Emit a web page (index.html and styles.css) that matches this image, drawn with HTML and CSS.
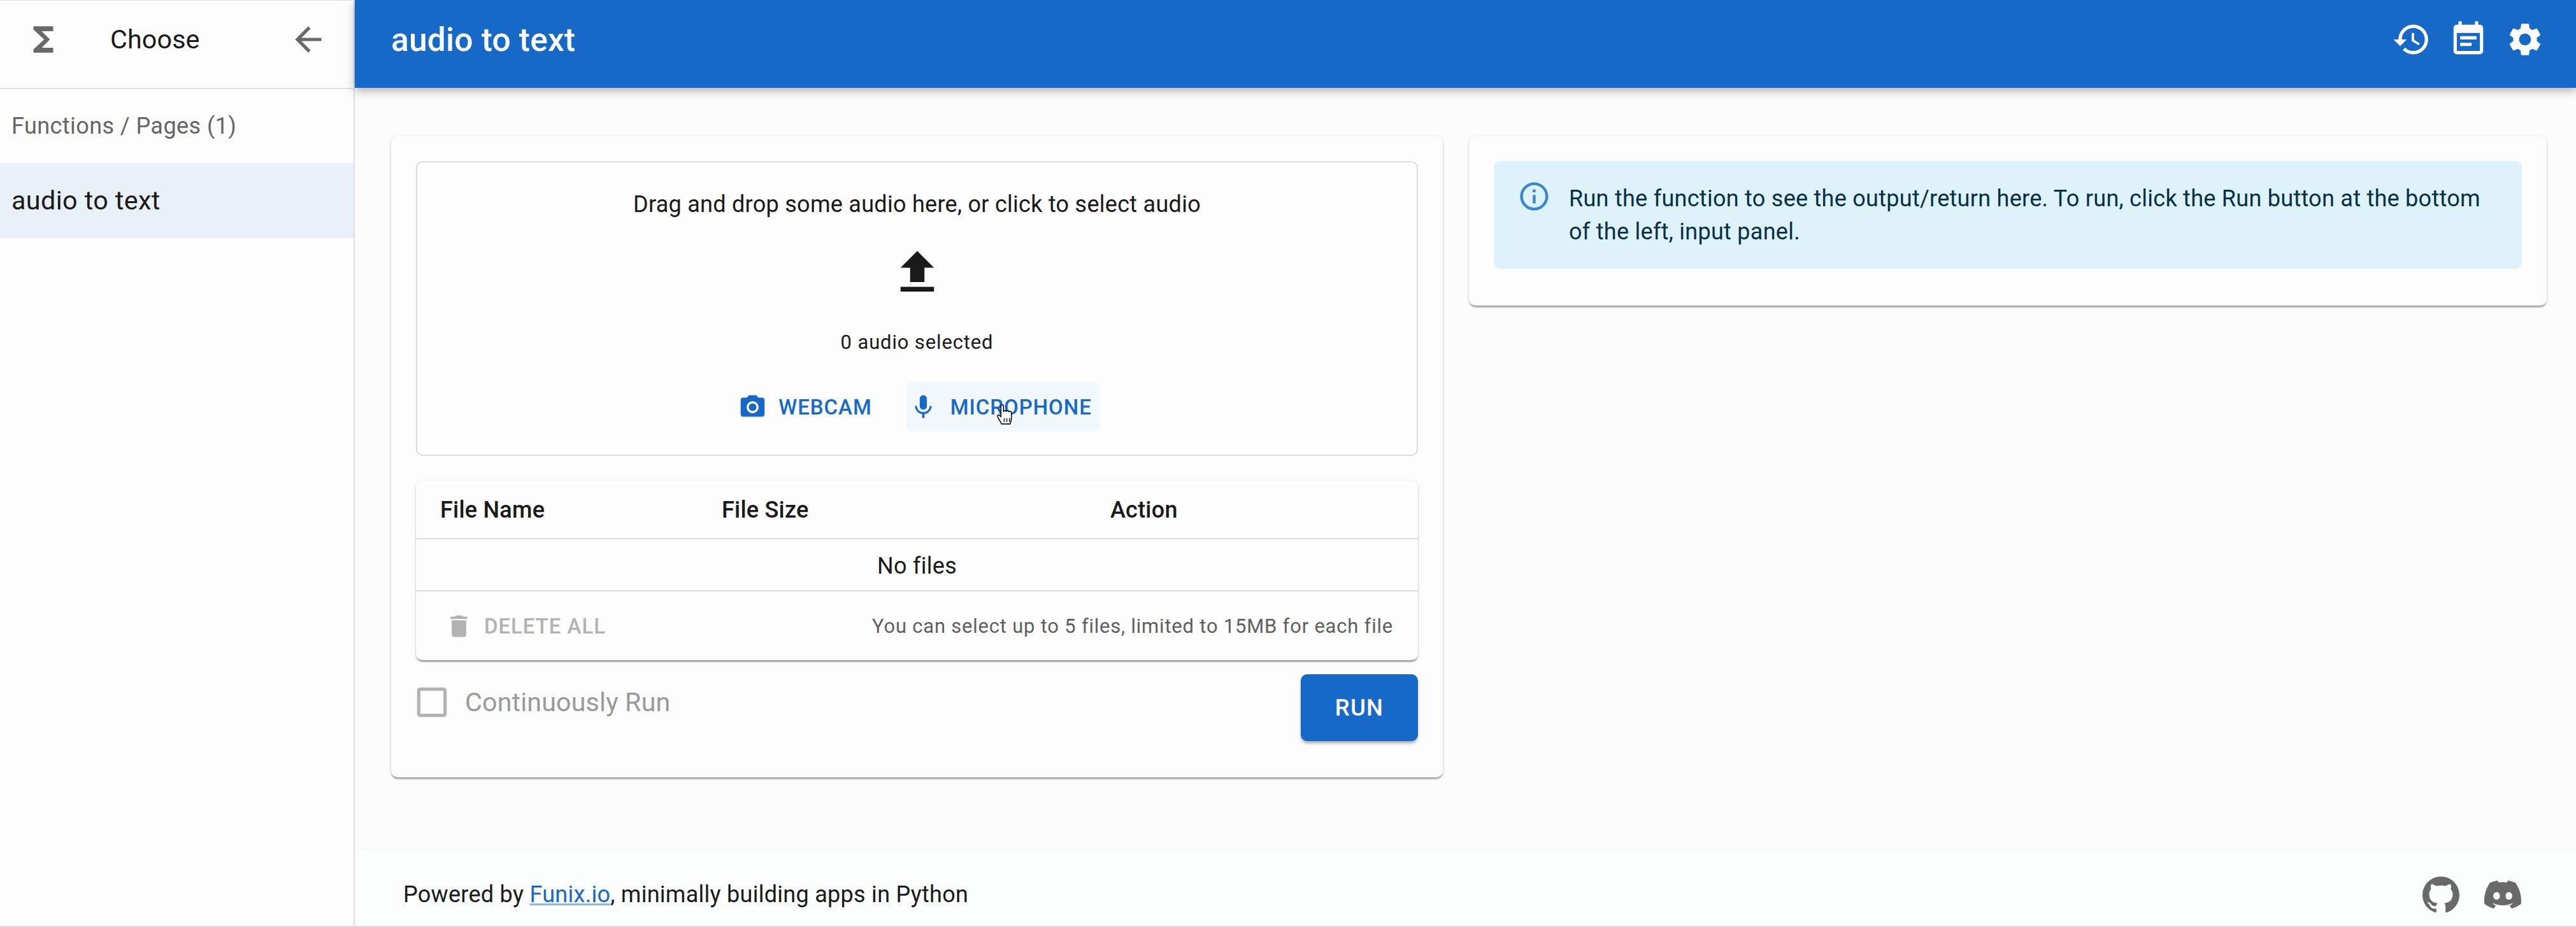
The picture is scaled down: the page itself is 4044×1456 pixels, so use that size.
FILE: index.html
```html
<!DOCTYPE html>
<html lang="en">
<head>
<meta charset="utf-8">
<title>audio to text</title>
<link rel="stylesheet" href="styles.css">
</head>
<body>
<div class="app">
  <aside class="sidebar">
    <div class="side-head">
      <svg class="ic ic-sigma" viewBox="0 0 24 24"><path d="M18 4H6v2l6.500 6L6 18v2h12v-3h-7l5-5-5-5h7z"/></svg>
      <span class="side-title">Choose</span>
      <svg class="ic ic-back" viewBox="0 0 24 24"><path d="M20 11H7.830l5.590-5.590L12 4l-8 8 8 8 1.410-1.410L7.830 13H20v-2z"/></svg>
    </div>
    <div class="side-label">Functions / Pages (1)</div>
    <div class="side-item">audio to text</div>
  </aside>
  <div class="main">
    <header class="topbar">
      <h1 class="top-title">audio to text</h1>
      <div class="top-icons">
        <svg class="ic-top" viewBox="0 0 24 24"><path d="M13 3c-4.970 0-9 4.030-9 9H1l3.890 3.890.07.14L9 12H6c0-3.870 3.130-7 7-7s7 3.130 7 7-3.130 7-7 7c-1.930 0-3.680-.79-4.940-2.060l-1.420 1.420C8.270 19.990 10.510 21 13 21c4.970 0 9-4.030 9-9s-4.030-9-9-9zm-1 5v5l4.280 2.540.72-1.210-3.500-2.080V8H12z"/></svg>
        <svg class="ic-top" viewBox="0 0 24 24"><path d="M17 10H7v2h10v-2zm2-7h-1V1h-2v2H8V1H6v2H5c-1.110 0-1.990.9-1.990 2L3 19c0 1.100.89 2 2 2h14c1.100 0 2-.9 2-2V5c0-1.100-.9-2-2-2zm0 16H5V8h14v11zm-5-5H7v2h7v-2z"/></svg>
        <svg class="ic-top" viewBox="0 0 24 24"><path d="M19.140 12.940c.04-.3.06-.61.06-.94 0-.32-.02-.64-.07-.94l2.030-1.580c.18-.14.23-.41.12-.61l-1.920-3.320c-.12-.22-.37-.29-.59-.22l-2.390.96c-.5-.38-1.030-.7-1.620-.94l-.36-2.540c-.04-.24-.24-.41-.48-.41h-3.840c-.24 0-.43.17-.47.41l-.36 2.540c-.59.24-1.130.57-1.620.94l-2.390-.96c-.22-.08-.47 0-.59.22L2.740 8.870c-.12.21-.08.47.12.61l2.030 1.580c-.05.3-.09.63-.09.94s.02.64.07.94l-2.030 1.580c-.18.14-.23.41-.12.61l1.920 3.320c.12.22.37.29.59.22l2.390-.96c.5.38 1.030.7 1.620.94l.36 2.540c.05.24.24.41.48.41h3.840c.24 0 .44-.17.47-.41l.36-2.540c.59-.24 1.130-.56 1.620-.94l2.390.96c.22.08.47 0 .59-.22l1.920-3.320c.12-.22.07-.47-.12-.61l-2.010-1.580zM12 15.600c-1.980 0-3.600-1.620-3.600-3.600s1.620-3.600 3.600-3.600 3.600 1.620 3.600 3.600-1.620 3.600-3.600 3.600z"/></svg>
      </div>
    </header>
    <main class="content">
      <section class="panel panel-input">
        <div class="drop">
          <div class="drop-text">Drag and drop some audio here, or click to select audio</div>
          <svg class="ic-upload" viewBox="0 0 24 24"><path d="M9 16h6v-6h4l-7-7-7 7h4v6zm-4 2h14v2H5v-2z"/></svg>
          <div class="drop-count">0 audio selected</div>
          <div class="drop-actions">
            <span class="btn-text">
              <svg class="ic-btn" viewBox="0 0 24 24"><path fill-rule="evenodd" d="M9 2 7.170 4H4c-1.100 0-2 .9-2 2v12c0 1.100.9 2 2 2h16c1.100 0 2-.9 2-2V6c0-1.100-.9-2-2-2h-3.170L15 2H9zm3 15c-2.760 0-5-2.240-5-5s2.240-5 5-5 5 2.240 5 5-2.240 5-5 5z"/><circle cx="12" cy="12" r="3.200"/></svg>
              WEBCAM
            </span>
            <span class="btn-text btn-hover">
              <svg class="ic-btn ic-mic" viewBox="0 0 24 24"><path d="M12 14c1.660 0 2.990-1.340 2.990-3L15 5c0-1.660-1.340-3-3-3S9 3.340 9 5v6c0 1.660 1.340 3 3 3zm5.300-3c0 3-2.540 5.100-5.300 5.100S6.700 14 6.700 11H5c0 3.410 2.720 6.230 6 6.720V21h2v-3.280c3.280-.48 6-3.300 6-6.720h-1.700z"/></svg>
              MICROPHONE
              <svg class="cursor" viewBox="0 0 30 34"><path d="M9 32 3 21c-1-2 1-4 3-2l2 2V5c0-3 4-3 4 0v8c1-2 4-2 4 0 1-2 4-2 4 .5 1-1.500 4-1 4 1.500v8c0 4-1 6-2 9z" fill="#fff" stroke="#111" stroke-width="1.600" stroke-linejoin="round"/><path d="M13 23v6M17 23v6M21 23v6" fill="none" stroke="#111" stroke-width="1.400"/></svg>
            </span>
          </div>
        </div>
        <div class="files">
          <div class="files-row files-head">
            <span>File Name</span>
            <span>File Size</span>
            <span>Action</span>
          </div>
          <div class="files-empty">No files</div>
          <div class="files-foot">
            <span class="btn-delete">
              <svg class="ic-btn ic-del" viewBox="0 0 24 24"><path d="M6 19c0 1.100.9 2 2 2h8c1.100 0 2-.9 2-2V7H6v12zM19 4h-3.500l-1-1h-5l-1 1H5v2h14V4z"/></svg>
              DELETE ALL
            </span>
            <span class="files-note">You can select up to 5 files, limited to 15MB for each file</span>
          </div>
        </div>
        <div class="run-row">
          <label class="check">
            <svg class="ic-check" viewBox="0 0 24 24"><path d="M19 5v14H5V5h14m0-2H5c-1.100 0-2 .9-2 2v14c0 1.100.9 2 2 2h14c1.100 0 2-.9 2-2V5c0-1.100-.9-2-2-2z"/></svg>
            <span>Continuously Run</span>
          </label>
          <button class="run" type="button">RUN</button>
        </div>
      </section>
      <section class="panel panel-output">
        <div class="alert">
          <svg class="ic-info" viewBox="0 0 24 24"><path d="M11 7h2v2h-2zm0 4h2v6h-2zm1-9C6.480 2 2 6.480 2 12s4.480 10 10 10 10-4.480 10-10S17.520 2 12 2zm0 18c-4.410 0-8-3.590-8-8s3.590-8 8-8 8 3.590 8 8-3.590 8-8 8z"/></svg>
          <p class="alert-text">Run the function to see the output/return here. To run, click the Run button at the bottom of the left, input panel.</p>
        </div>
      </section>
    </main>
    <footer class="footer">
      <span class="foot-text">Powered by <a class="foot-link" href="#">Funix.io</a>, minimally building apps in Python</span>
      <div class="foot-icons">
        <svg class="ic-foot" viewBox="0 0 24 24"><path d="M12 .297c-6.630 0-12 5.373-12 12 0 5.303 3.438 9.800 8.205 11.385.6.113.82-.258.82-.577 0-.285-.01-1.040-.015-2.040-3.338.724-4.042-1.610-4.042-1.610C4.422 18.070 3.633 17.700 3.633 17.700c-1.087-.744.084-.729.084-.729 1.205.084 1.838 1.236 1.838 1.236 1.070 1.835 2.809 1.305 3.495.998.108-.776.417-1.305.76-1.605-2.665-.3-5.466-1.332-5.466-5.930 0-1.310.465-2.380 1.235-3.220-.135-.303-.54-1.523.105-3.176 0 0 1.005-.322 3.300 1.230.96-.267 1.980-.399 3-.405 1.020.006 2.040.138 3 .405 2.280-1.552 3.285-1.230 3.285-1.230.645 1.653.24 2.873.12 3.176.765.84 1.230 1.910 1.230 3.220 0 4.610-2.805 5.625-5.475 5.920.42.36.81 1.096.81 2.220 0 1.606-.015 2.896-.015 3.286 0 .315.21.69.825.57C20.565 22.092 24 17.592 24 12.297c0-6.627-5.373-12-12-12"/></svg>
        <svg class="ic-foot" viewBox="0 0 24 24"><path d="M20.317 4.370a19.791 19.791 0 0 0-4.885-1.515.074.074 0 0 0-.079.037c-.211.375-.445.865-.608 1.250-1.845-.276-3.680-.276-5.487 0-.164-.393-.406-.874-.618-1.250a.077.077 0 0 0-.079-.037 19.736 19.736 0 0 0-4.885 1.515.07.07 0 0 0-.032.028C.533 9.046-.319 13.580.099 18.058a.082.082 0 0 0 .031.056c2.053 1.508 4.041 2.423 5.993 3.029a.078.078 0 0 0 .084-.027c.462-.63.873-1.295 1.226-1.994a.076.076 0 0 0-.042-.106c-.653-.248-1.274-.549-1.872-.892a.077.077 0 0 1-.008-.128c.126-.094.252-.192.372-.291a.074.074 0 0 1 .078-.011c3.928 1.793 8.180 1.793 12.061 0a.074.074 0 0 1 .079.010c.12.099.246.198.373.292a.077.077 0 0 1-.007.128 12.299 12.299 0 0 1-1.873.891.077.077 0 0 0-.041.107c.36.698.772 1.363 1.225 1.993a.076.076 0 0 0 .084.029c1.961-.607 3.950-1.522 6.002-3.029a.077.077 0 0 0 .031-.055c.5-5.177-.838-9.674-3.548-13.660a.061.061 0 0 0-.031-.029zM8.020 15.331c-1.183 0-2.157-1.086-2.157-2.419 0-1.333.956-2.419 2.157-2.419 1.211 0 2.176 1.095 2.157 2.419 0 1.333-.956 2.419-2.157 2.419zm7.975 0c-1.183 0-2.157-1.086-2.157-2.419 0-1.333.955-2.419 2.157-2.419 1.211 0 2.176 1.095 2.157 2.419 0 1.333-.946 2.419-2.157 2.419z"/></svg>
      </div>
    </footer>
  </div>
</div>
</body>
</html>
```
FILE: styles.css
```css
* { box-sizing: border-box; }
html, body { margin: 0; height: 100%; }
body {
  font-family: Roboto, "Liberation Sans", sans-serif;
  background: #fcfcfc;
  color: #1a1a1a;
  overflow: hidden;
}
.app { display: flex; height: 1456px; border-bottom: 2px solid #e0e0e0; }

/* sidebar */
.sidebar { width: 557px; flex: none; border-right: 2px solid #dedede; border-top: 1px solid #e0e0e0; background: #fdfdfd; }
.side-head { height: 139px; display: flex; align-items: center; border-bottom: 2px solid #e0e0e0; padding: 0 0 16px 37px; }
.ic { fill: #696969; display: block; flex: none; }
.ic-sigma { width: 62px; height: 62px; }
.side-title { font-size: 41.3px; letter-spacing: .1px; margin-left: 74px; flex: 1; }
.ic-back { width: 62px; height: 62px; margin-right: 40px; }
.side-label { height: 116px; padding: 0 18px; display: flex; align-items: center; font-size: 36.1px; letter-spacing: .39px; color: #666; }
.side-item { height: 118px; padding: 0 18px; display: flex; align-items: center; font-size: 41.3px; letter-spacing: .39px; background: #e8f0f8; }

/* main */
.main { flex: 1; min-width: 0; display: flex; flex-direction: column; }
.topbar { height: 138px; flex: none; background: #1769c8; color: #fdfdfd; display: flex; align-items: center; justify-content: space-between; padding: 0 49px 14px 57px; box-shadow: 0 5px 14px rgba(0,0,0,.3); position: relative; }
.top-title { margin: 0; font-size: 51.6px; font-weight: 500; letter-spacing: .15px; }
.top-icons { display: flex; gap: 27px; }
.ic-top { width: 62px; height: 62px; fill: #fdfdfd; display: block; }

.content { flex: 1; display: grid; grid-template-columns: 1651px 1692px; column-gap: 41px; align-items: start; padding: 76px 46px 0 57px; }
.panel { background: #fdfdfd; border-radius: 10px; box-shadow: 0 3px 3px -1px rgba(0,0,0,.42), 0 1px 5px rgba(0,0,0,.12); padding: 39px; }
.panel-input { height: 1007px; padding-bottom: 0; }
.panel-output { height: 266px; }

/* upload */
.drop { height: 463px; border: 2px solid #dcdcdc; border-radius: 10px; display: flex; flex-direction: column; align-items: center; padding-top: 44px; }
.drop-text { font-size: 36.1px; line-height: 44px; letter-spacing: .24px; color: #1a1a1a; }
.ic-upload { width: 90px; height: 90px; fill: #1a1a1a; display: block; margin-top: 40px; }
.drop-count { font-size: 31px; line-height: 40px; letter-spacing: .85px; margin-top: 45px; }
.drop-actions { display: flex; gap: 40px; margin-top: 42px; }
.btn-text { display: flex; align-items: center; gap: 18px; height: 78px; padding: 0 13px 0 7px; border-radius: 10px; color: #1769c8; font-size: 33px; font-weight: 500; letter-spacing: .95px; position: relative; }
.btn-hover { background: #f3f8fc; }
.ic-btn { width: 45px; height: 45px; fill: currentColor; display: block; flex: none; }
.ic-mic { margin-left: -2px; margin-right: 2px; }
.cursor { position: absolute; left: 141px; top: 33px; width: 31px; height: 35px; }

/* file table */
.files { margin-top: 39px; height: 282px; border-radius: 10px; background: #fdfdfd; box-shadow: 0 3px 3px -1px rgba(0,0,0,.45), 0 1px 5px rgba(0,0,0,.12); display: flex; flex-direction: column; }
.files-row { height: 92px; display: grid; grid-template-columns: 442px 610px 1fr; align-items: center; padding: 2px 0 0 38px; border-bottom: 2px solid #dedede; font-size: 36.1px; font-weight: 500; letter-spacing: .2px; }
.files-empty { height: 82px; display: flex; align-items: center; justify-content: center; padding-top: 3px; border-bottom: 2px solid #dedede; font-size: 36.1px; letter-spacing: .24px; }
.files-foot { flex: 1; display: flex; align-items: center; justify-content: space-between; padding: 0 39px 0 45px; }
.btn-delete { display: flex; align-items: center; gap: 17px; color: #b2b2b2; font-size: 33px; font-weight: 500; letter-spacing: .95px; }
.files-note { font-size: 31px; letter-spacing: .78px; color: #5f5f5f; }

/* run row */
.run-row { display: flex; justify-content: space-between; align-items: flex-start; padding-top: 22px; }
.check { display: flex; align-items: center; gap: 21px; margin: 13px 0 0 -6px; color: #9a9a9a; font-size: 41.3px; letter-spacing: .1px; }
.ic-check { width: 62px; height: 62px; fill: #b2b2b2; display: block; }
.run { width: 184px; height: 105px; border: 0; border-radius: 10px; background: #1769c8; color: #fdfdfd; font: 500 36.6px Roboto, sans-serif; letter-spacing: 1.2px; box-shadow: 0 4px 5px -1px rgba(0,0,0,.35); }

/* alert */
.alert { height: 169px; background: #def2fa; border-radius: 10px; display: flex; padding: 29px 40px 0 37px; color: #053047; }
.ic-info { width: 53px; height: 53px; fill: #3a87d0; flex: none; display: block; }
.alert-text { margin: 4px 0 0 28px; font-size: 36.1px; line-height: 52px; letter-spacing: .24px; }

/* footer */
.footer { height: 121px; flex: none; display: flex; align-items: center; justify-content: space-between; padding: 20px 86px 0 76px; border-top: 2px solid #f6f6f6; background: #fcfdfd; border-radius: 10px 0 0 0; }
.foot-text { font-size: 36.1px; letter-spacing: .24px; color: #1a1a1a; }
.foot-link { color: #1769c8; text-decoration: underline; text-decoration-color: #8db6e5; }
.foot-icons { display: flex; gap: 39px; align-items: center; }
.ic-foot { width: 58px; height: 58px; fill: #696969; display: block; }
```
